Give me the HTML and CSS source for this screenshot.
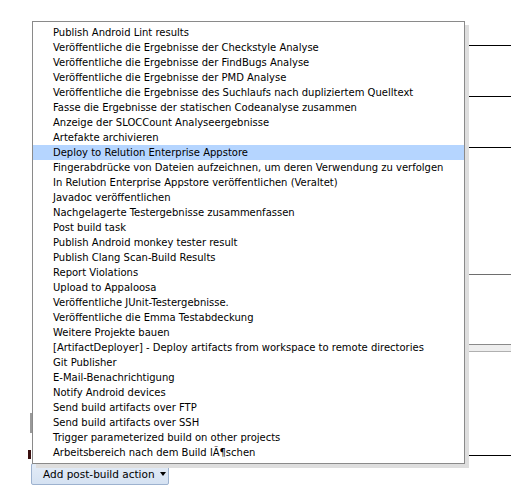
FILE: index.html
```html
<!DOCTYPE html>
<html>
<head>
<meta charset="utf-8">
<link rel="stylesheet" href="styles.css">
</head>
<body>
<div class="page">
  <div class="rules">
    <div class="rule black r1"></div>
    <div class="rule black r2"></div>
    <div class="rule black r3"></div>
    <div class="rule gray r4"></div>
    <div class="band r5"></div>
    <div class="rule black r6"></div>
  </div>
  <div class="left-marks">
    <div class="mark-gray"></div>
    <div class="mark-dark"></div>
  </div>
  <div class="actions">
    <button class="add-btn">Add post-build action <span class="caret"></span></button>
  </div>

  <ul class="menu">
    <li>Publish Android Lint results</li>
    <li>Veröffentliche die Ergebnisse der Checkstyle Analyse</li>
    <li>Veröffentliche die Ergebnisse der FindBugs Analyse</li>
    <li>Veröffentliche die Ergebnisse der PMD Analyse</li>
    <li>Veröffentliche die Ergebnisse des Suchlaufs nach dupliziertem Quelltext</li>
    <li>Fasse die Ergebnisse der statischen Codeanalyse zusammen</li>
    <li>Anzeige der SLOCCount Analyseergebnisse</li>
    <li>Artefakte archivieren</li>
    <li class="active">Deploy to Relution Enterprise Appstore</li>
    <li>Fingerabdrücke von Dateien aufzeichnen, um deren Verwendung zu verfolgen</li>
    <li>In Relution Enterprise Appstore veröffentlichen (Veraltet)</li>
    <li>Javadoc veröffentlichen</li>
    <li>Nachgelagerte Testergebnisse zusammenfassen</li>
    <li>Post build task</li>
    <li>Publish Android monkey tester result</li>
    <li>Publish Clang Scan-Build Results</li>
    <li>Report Violations</li>
    <li>Upload to Appaloosa</li>
    <li>Veröffentliche JUnit-Testergebnisse.</li>
    <li>Veröffentliche die Emma Testabdeckung</li>
    <li>Weitere Projekte bauen</li>
    <li>[ArtifactDeployer] - Deploy artifacts from workspace to remote directories</li>
    <li>Git Publisher</li>
    <li>E-Mail-Benachrichtigung</li>
    <li>Notify Android devices</li>
    <li>Send build artifacts over FTP</li>
    <li>Send build artifacts over SSH</li>
    <li>Trigger parameterized build on other projects</li>
    <li>Arbeitsbereich nach dem Build lÃ¶schen</li>
  </ul>
</div>
</body>
</html>
```

FILE: styles.css
```css
html, body {
  margin: 0;
  padding: 0;
  background: #fff;
}

.page {
  position: relative;
  width: 511px;
  height: 498px;
  overflow: hidden;
  font-family: "DejaVu Sans", Verdana, sans-serif;
}

.rules {
  padding-left: 40px;
}

.rule {
  height: 1px;
}

.rule.black { background: #000; }
.rule.gray { background: #6e6e6e; }

.r1 { margin-top: 45px; }
.r2 { margin-top: 50px; }
.r3 { margin-top: 50px; }
.r4 { margin-top: 126px; }

.band {
  margin-top: 69px;
  height: 6px;
  background: #eeeeee;
  border-top: 1px solid #8a8a8a;
  border-bottom: 1px solid #b0b0b0;
}

.r6 { margin-top: 103px; }

.left-marks {
  position: absolute;
  left: 28px;
  top: 413px;
  width: 4px;
}

.mark-gray {
  margin-left: 2px;
  width: 2px;
  height: 20px;
  background: #9a9a9a;
}

.mark-dark {
  margin-top: 17px;
  width: 3px;
  height: 9px;
  background: #3a1010;
}

.actions {
  padding: 7px 0 0 31px;
}

.add-btn {
  display: flex;
  align-items: center;
  gap: 5px;
  height: 22px;
  width: 138px;
  margin: 0;
  padding: 0 0 0 11px;
  border: 1px solid #9db2cf;
  border-radius: 2px;
  background: linear-gradient(#e3ecf7, #d5e2f2);
  font-family: "DejaVu Sans", Verdana, sans-serif;
  font-size: 10.5px;
  color: #000;
  white-space: nowrap;
  box-sizing: border-box;
}

.caret {
  width: 0;
  height: 0;
  border-left: 3.5px solid transparent;
  border-right: 3.5px solid transparent;
  border-top: 4px solid #000;
}

.menu {
  position: absolute;
  left: 32px;
  top: 21px;
  width: 433px;
  height: 443px;
  box-sizing: border-box;
  margin: 0;
  padding: 3px 0 0 0;
  list-style: none;
  background: #fff;
  border: 1px solid #8a8a8a;
  box-shadow: 4px 4px 0 #dedede;
  font-size: 10px;
  color: #000;
}

.menu li {
  height: 15px;
  line-height: 15px;
  padding-left: 20px;
  white-space: nowrap;
}

.menu li.active {
  background: #b5d5ff;
}
```
